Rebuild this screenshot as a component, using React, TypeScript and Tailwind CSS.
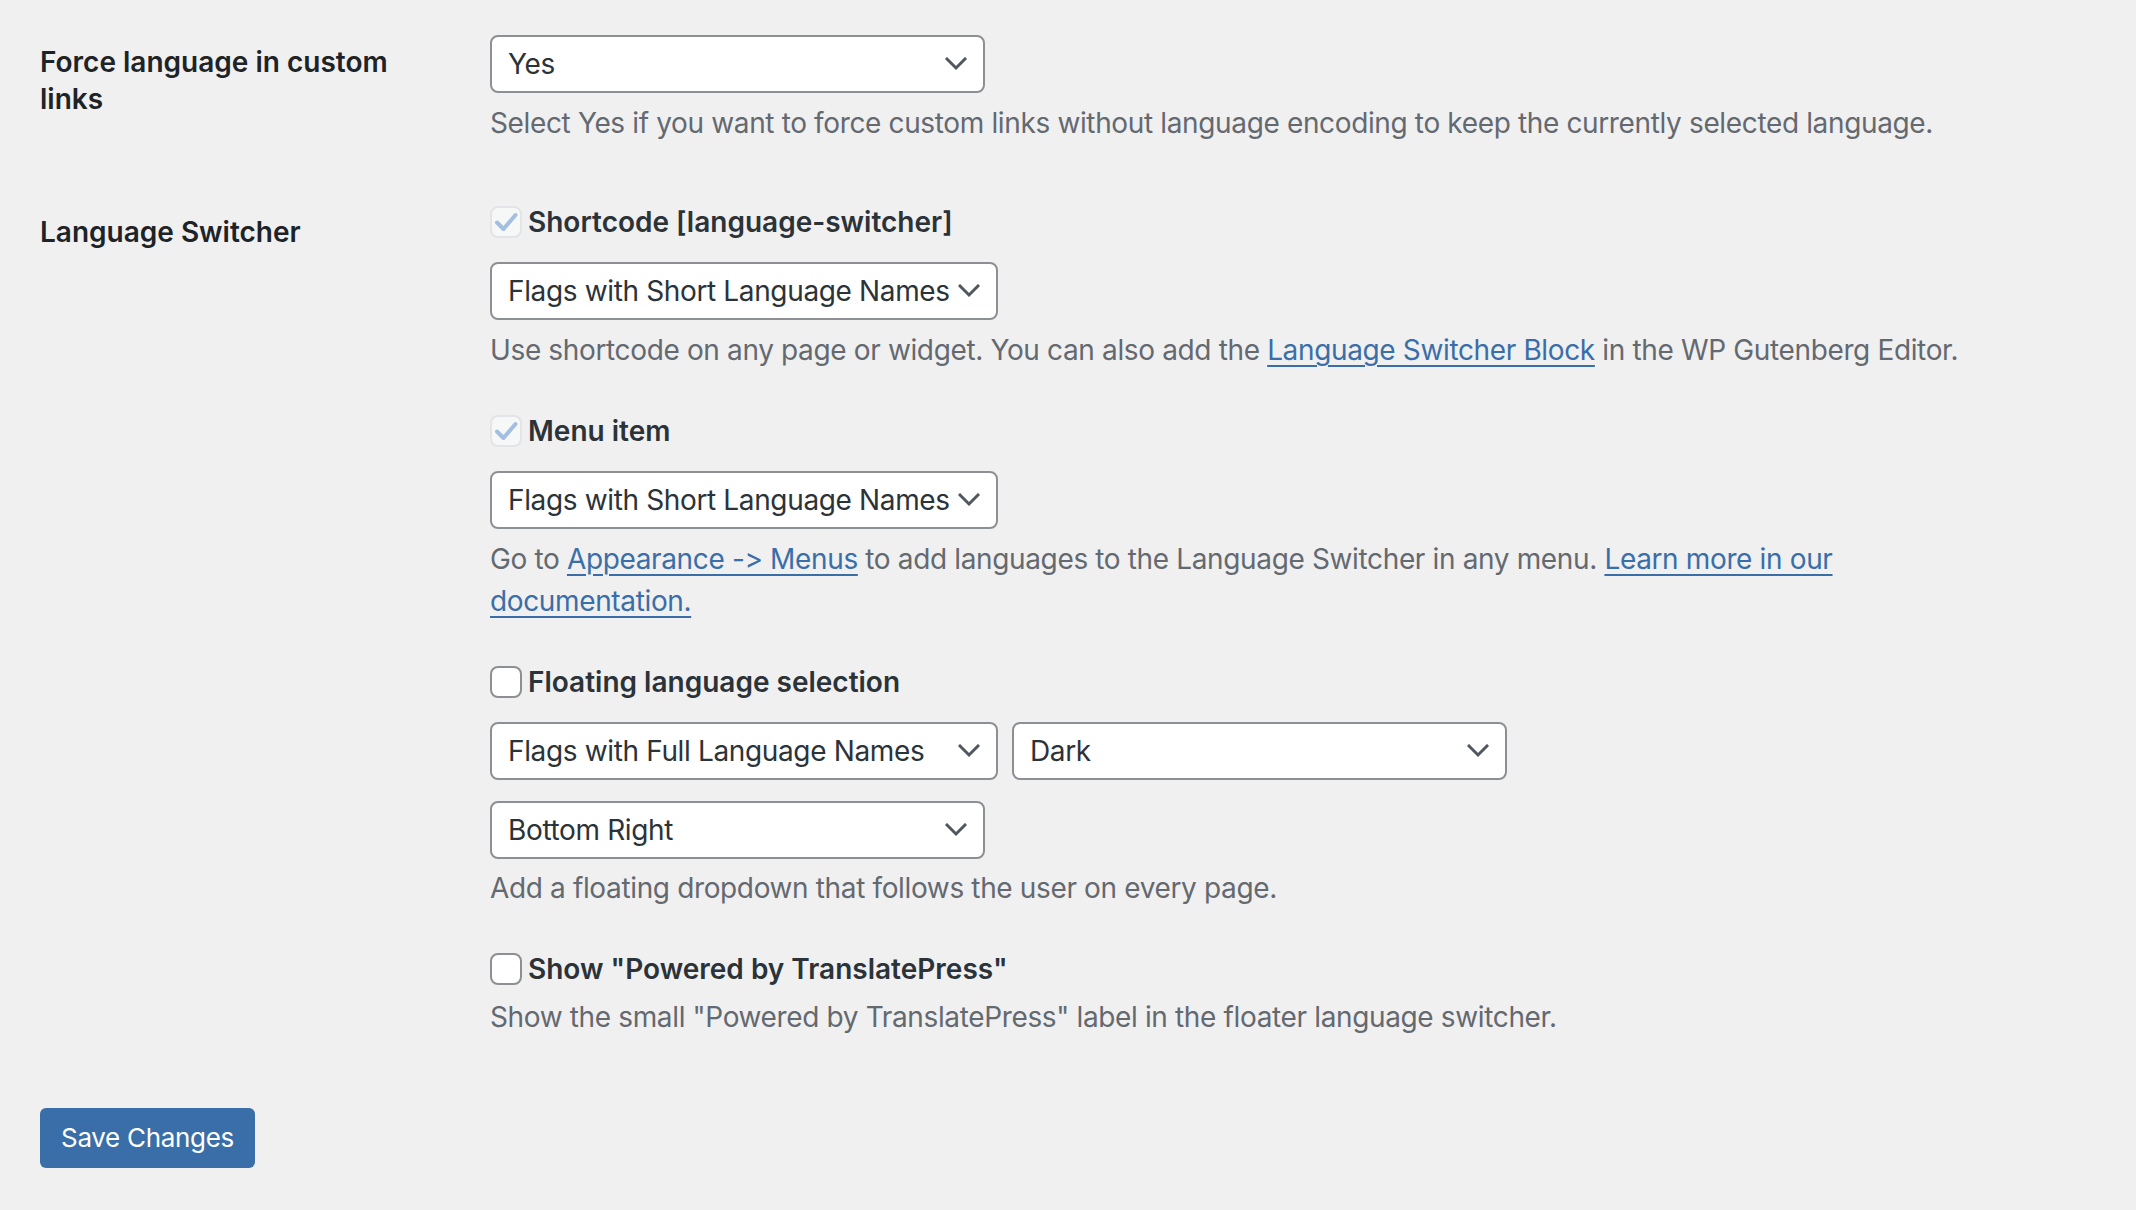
import React from "react";

const Chevron = () => (
  <svg width="22" height="14" viewBox="0 0 22 14" className="shrink-0">
    <path d="M2 2 L11 11 L20 2" fill="none" stroke="#50575e" strokeWidth="3" strokeLinecap="square" />
  </svg>
);

const Select = ({ value, w }: { value: string; w: string }) => (
  <div className={`${w} h-[58px] bg-white border-2 border-[#8c8f94] rounded-[8px] flex items-center justify-between pl-[16px] pr-[16px] text-[28px] tracking-[-0.36px] text-[#2c3338]`}>
    <span className="whitespace-nowrap">{value}</span>
    <Chevron />
  </div>
);

const CheckDisabled = () => (
  <div className="w-[32px] h-[32px] rounded-[8px] border-2 border-[#e2e4e7] bg-[#f6f7f7] flex items-center justify-center shrink-0">
    <svg width="24" height="24" viewBox="0 0 24 24">
      <path d="M3 12.5 L9.5 19 L21.5 5" fill="none" stroke="#a3bfe0" strokeWidth="4" strokeLinecap="round" strokeLinejoin="round" />
    </svg>
  </div>
);

const CheckEmpty = () => (
  <div className="w-[32px] h-[32px] rounded-[8px] border-2 border-[#8c8f94] bg-white shrink-0" />
);

const Link = ({ children }: { children: React.ReactNode }) => (
  <a className="text-[#3a6ea8] underline underline-offset-[5px] decoration-[2px]">{children}</a>
);

const desc = "text-[28px] leading-[42px] text-[#646970] tracking-[-0.36px]";

export default function App() {
  return (
    <div
      className="w-[2136px] h-[1210px] bg-[#f0f0f1] text-[#1d2327] overflow-hidden [font-feature-settings:'calt'_0,'liga'_0]"
      style={{ fontFamily: "Inter, 'Noto Sans', sans-serif" }}
    >
      <div className="pl-[40px]">
        {/* Row 1 */}
        <div className="flex">
          <div className="w-[450px] pt-[44px] text-[28px] leading-[37px] font-semibold text-[#1d2327] pr-[50px]">
            Force language in custom links
          </div>
          <div className="pt-[35px] pb-[30px]">
            <Select value="Yes" w="w-[495px]" />
            <p className={`mt-[9px] ${desc}`}>
              Select Yes if you want to force custom links without language encoding to keep the currently selected language.
            </p>
          </div>
        </div>

        {/* Row 2 */}
        <div className="flex">
          <div className="w-[450px] pt-[40px] text-[28px] leading-[37px] font-semibold text-[#1d2327]">
            Language Switcher
          </div>
          <div className="pt-[31px] flex flex-col">
            <div className="flex items-center gap-[6px] h-[32px] mt-[1px]">
              <CheckDisabled />
              <span className="text-[28px] font-semibold text-[#2c3338]">Shortcode [language-switcher]</span>
            </div>
            <div className="mt-[24px]">
              <Select value="Flags with Short Language Names" w="w-[508px]" />
            </div>
            <p className={`mt-[9px] max-w-[1520px] ${desc}`}>
              Use shortcode on any page or widget. You can also add the <Link>Language Switcher Block</Link> in the WP Gutenberg Editor.
            </p>

            <div className="flex items-center gap-[6px] h-[32px] mt-[44px]">
              <CheckDisabled />
              <span className="text-[28px] font-semibold text-[#2c3338]">Menu item</span>
            </div>
            <div className="mt-[24px]">
              <Select value="Flags with Short Language Names" w="w-[508px]" />
            </div>
            <p className={`mt-[9px] max-w-[1480px] ${desc}`}>
              Go to <Link>Appearance -&gt; Menus</Link> to add languages to the Language Switcher in any menu. <Link>Learn more in our documentation.</Link>
            </p>

            <div className="flex items-center gap-[6px] h-[32px] mt-[44px]">
              <CheckEmpty />
              <span className="text-[28px] font-semibold text-[#2c3338]">Floating language selection</span>
            </div>
            <div className="mt-[24px] flex gap-[14px]">
              <Select value="Flags with Full Language Names" w="w-[508px]" />
              <Select value="Dark" w="w-[495px]" />
            </div>
            <div className="mt-[21px]">
              <Select value="Bottom Right" w="w-[495px]" />
            </div>
            <p className={`mt-[8px] ${desc}`}>
              Add a floating dropdown that follows the user on every page.
            </p>

            <div className="flex items-center gap-[6px] h-[32px] mt-[44px]">
              <CheckEmpty />
              <span className="text-[28px] font-semibold text-[#2c3338]">Show "Powered by TranslatePress"</span>
            </div>
            <p className={`mt-[11px] ${desc}`}>
              Show the small "Powered by TranslatePress" label in the floater language switcher.
            </p>
          </div>
        </div>

        <div className="mt-[70px]">
          <button className="h-[60px] px-[21px] rounded-[6px] bg-[#3a6ea8] text-white text-[26px] tracking-[-0.3px] leading-none">
            Save Changes
          </button>
        </div>
      </div>
    </div>
  );
}
